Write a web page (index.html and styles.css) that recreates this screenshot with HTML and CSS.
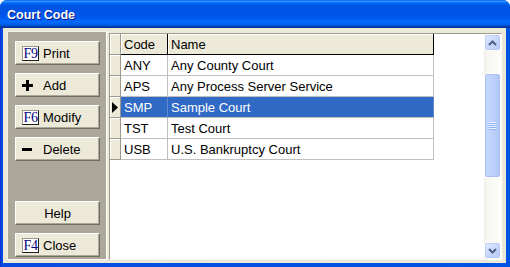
FILE: index.html
```html
<!DOCTYPE html>
<html>
<head>
<meta charset="utf-8">
<title>Court Code</title>
<link rel="stylesheet" href="styles.css">
</head>
<body>
<div class="window">
  <div class="titlebar"><span class="title">Court Code</span></div>
  <div class="client">
    <div class="panel">
      <button class="btn"><span class="fkey">F9</span><span class="lbl">Print</span></button>
      <button class="btn"><span class="ico"><svg width="11" height="11" viewBox="0 0 11 11"><path d="M4 0h3v4h4v3H7v4H4V7H0V4h4z" fill="#000"/></svg></span><span class="lbl">Add</span></button>
      <button class="btn"><span class="fkey">F6</span><span class="lbl">Modify</span></button>
      <button class="btn"><span class="ico"><svg width="11" height="11" viewBox="0 0 11 11"><path d="M0 4h10v3H0z" fill="#000"/></svg></span><span class="lbl">Delete</span></button>
      <button class="btn center help">Help</button>
      <button class="btn"><span class="fkey">F4</span><span class="lbl">Close</span></button>
    </div>
    <div class="gridbox">
      <div class="table">
        <div class="row head">
          <div class="ind"></div>
          <div class="cell code">Code</div>
          <div class="cell name">Name</div>
        </div>
        <div class="row">
          <div class="ind"></div>
          <div class="cell code">ANY</div>
          <div class="cell name">Any County Court</div>
        </div>
        <div class="row">
          <div class="ind"></div>
          <div class="cell code">APS</div>
          <div class="cell name">Any Process Server Service</div>
        </div>
        <div class="row sel">
          <div class="ind"><svg width="6" height="11" viewBox="0 0 6 11"><path d="M0 0L6 5.5L0 11z" fill="#000"/></svg></div>
          <div class="cell code">SMP</div>
          <div class="cell name">Sample Court</div>
        </div>
        <div class="row">
          <div class="ind"></div>
          <div class="cell code">TST</div>
          <div class="cell name">Test Court</div>
        </div>
        <div class="row">
          <div class="ind"></div>
          <div class="cell code">USB</div>
          <div class="cell name">U.S. Bankruptcy Court</div>
        </div>
      </div>
      <div class="scrollbar">
        <div class="sb-btn"><svg width="9" height="6" viewBox="0 0 9 6"><path d="M1 5L4.5 1.5L8 5" fill="none" stroke="#4D6185" stroke-width="2"/></svg></div>
        <div class="track">
          <div class="thumb">
            <div class="grip"><i></i><i></i><i></i><i></i></div>
          </div>
        </div>
        <div class="sb-btn"><svg width="9" height="6" viewBox="0 0 9 6"><path d="M1 1L4.5 4.5L8 1" fill="none" stroke="#4D6185" stroke-width="2"/></svg></div>
      </div>
    </div>
  </div>
</div>
</body>
</html>
```
FILE: styles.css
```css
* { box-sizing: border-box; }
html, body { margin: 0; padding: 0; background: #ffffff; }
body { font-family: "Liberation Sans", Arial, sans-serif; font-size: 13px; }

.window {
  width: 510px;
  height: 267px;
  display: flex;
  flex-direction: column;
  background: linear-gradient(to right, #0831D9 0, #0A4BE0 2px, #0054E3 100%);
  border-radius: 7px 7px 0 0;
  overflow: hidden;
}

.titlebar {
  height: 28px;
  flex: none;
  display: flex;
  align-items: center;
  padding: 2px 0 0 7px;
  background: linear-gradient(to bottom, #0058EE 0%, #3593FF 4%, #288EFF 6%, #127DFF 8%, #036FFC 10%, #0262EE 14%, #0057E5 20%, #0054E3 24%, #0055EB 56%, #005BF5 66%, #026AFE 76%, #0062EF 86%, #0052D6 92%, #0040AB 94%, #003092 100%);
}
.title {
  color: #ffffff;
  font-weight: bold;
  font-size: 12.5px;
  text-shadow: 1px 1px #0A1883;
}

.client {
  flex: 1;
  margin: 0 4px 4px 3px;
  background: #ECE9D8;
  display: flex;
  align-items: flex-start;
  padding: 3px 0 3px 4px;
}

.panel {
  width: 100px;
  height: 229px;
  flex: none;
  background: #ACA899;
  border: 1px solid;
  border-color: #F4F2E8 #ffffff #ffffff #F4F2E8;
  display: flex;
  flex-direction: column;
  gap: 8px;
  padding: 9px 6px 2px 7px;
}

.btn {
  height: 24px;
  width: 85px;
  flex: none;
  margin: 0;
  display: flex;
  align-items: center;
  padding: 0 0 0 6px;
  background: #ECE9D8;
  border: 1px solid;
  border-color: #ffffff #716F64 #716F64 #ffffff;
  box-shadow: inset -1px -1px #ACA899;
  font-family: "Liberation Sans", Arial, sans-serif;
  font-size: 13px;
  color: #000000;
  text-align: left;
}
.btn.center { justify-content: center; padding: 0; }
.btn.help { margin-top: auto; }

.fkey {
  width: 17px;
  height: 15px;
  flex: none;
  background: #ffffff;
  border: 1px solid;
  border-color: #9C9A8E #1E1E1E #1E1E1E #9C9A8E;
  color: #000080;
  font-family: "Liberation Serif", "Times New Roman", serif;
  font-size: 14px;
  line-height: 13px;
  text-align: center;
  letter-spacing: -0.5px;
}
.ico { width: 17px; flex: none; display: flex; align-items: center; }
.lbl { margin-left: 4px; }

.gridbox {
  margin: 2px 0 0 2px;
  width: 393px;
  height: 227px;
  flex: none;
  border: 1px solid;
  border-color: #9C9A8E #ffffff #ffffff #9C9A8E;
  background: #ffffff;
  display: flex;
}

.table { width: 374px; flex: none; }
.row { display: flex; height: 21px; }
.ind {
  width: 11px;
  flex: none;
  background: #ECE9D8;
  border-right: 1px solid #9C9A8E;
  border-bottom: 1px solid #9C9A8E;
  box-shadow: inset 1px 1px #ffffff;
  display: flex;
  align-items: center;
  padding-left: 2px;
}
.cell {
  display: flex;
  align-items: center;
  padding-left: 3px;
  border-right: 1px solid #C0C0C0;
  border-bottom: 1px solid #C0C0C0;
  white-space: nowrap;
  overflow: hidden;
  color: #000000;
}
.code { width: 47px; flex: none; }
.name { width: 266px; flex: none; }

.head .cell {
  background: #ECE9D8;
  border-right-color: #000000;
  border-bottom-color: #000000;
  box-shadow: inset 1px 1px #ffffff;
}
.sel .cell {
  background: #316AC5;
  color: #ffffff;
  border-right-color: #5F88CF;
}

.scrollbar {
  width: 17px;
  flex: none;
  margin-left: auto;
  display: flex;
  flex-direction: column;
  background: linear-gradient(to right, #EEEDE5 0, #F7F6F1 3px, #FEFEFB 100%);
}
.sb-btn {
  height: 17px;
  flex: none;
  border: 1px solid #ffffff;
  border-radius: 3px;
  background: linear-gradient(135deg, #E4ECFD 0%, #C8D8FC 50%, #B4C9F6 100%);
  box-shadow: inset 0 0 0 1px #B7CBF5;
  display: flex;
  align-items: center;
  justify-content: center;
}
.track { flex: 1; padding-top: 22px; }
.thumb {
  height: 105px;
  border: 1px solid #ffffff;
  border-radius: 3px;
  background: linear-gradient(to right, #C9D9FC 0%, #BDD0FA 50%, #B2C8F7 100%);
  box-shadow: inset 0 0 0 1px #A8C0F2;
  display: flex;
  align-items: center;
  justify-content: center;
}
.grip { display: flex; flex-direction: column; gap: 1px; }
.grip i { display: block; width: 7px; height: 1px; background: #EEF4FE; box-shadow: 0 1px #8CB0F8; }
```
